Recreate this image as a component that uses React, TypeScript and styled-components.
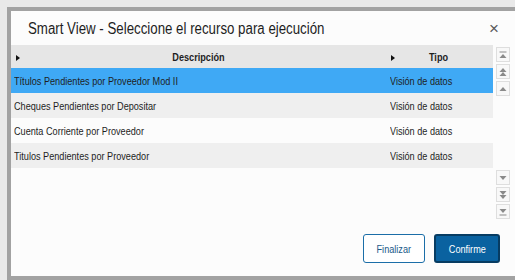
import React from 'react';
import styled, { createGlobalStyle } from 'styled-components';

type Row = {
  name: string;
  type: string;
};

const rows: Row[] = [
  { name: 'Títulos Pendientes por Proveedor Mod II', type: 'Visión de datos' },
  { name: 'Cheques Pendientes por Depositar', type: 'Visión de datos' },
  { name: 'Cuenta Corriente por Proveedor', type: 'Visión de datos' },
  { name: 'Titulos Pendientes por Proveedor', type: 'Visión de datos' }
];

const FONT = '"Liberation Sans", Arial, sans-serif';

const GlobalStyle = createGlobalStyle`
  html, body {
    margin: 0;
    padding: 0;
    background: #e9e9e9;
    overflow: hidden;
  }
  body {
    font-family: ${FONT};
  }
`;

// the source UI uses a narrow sans face; squeeze the glyphs horizontally
const Narrow = styled.span<{ $origin?: 'left' | 'center' }>`
  display: inline-block;
  white-space: nowrap;
  transform: scaleX(0.83);
  transform-origin: ${({ $origin }) => $origin ?? 'left'} center;
`;

const Page = styled.div`
  padding: 7px 0 0 7px;
  height: 280px;
  box-sizing: border-box;
`;

const Frame = styled.div`
  width: 506px;
  height: 265px;
  border: 4px solid #a2a2a2;
  background: #fcfcfc;
  display: flex;
  flex-direction: column;
`;

const TitleBar = styled.div`
  height: 34px;
  display: flex;
  align-items: center;
  padding: 0 0 0 17px;
`;

const Title = styled.div`
  flex: 1;
  font-size: 16px;
  color: #1e1e1e;
  padding-top: 1px;
`;

const Close = styled.div`
  width: 12px;
  margin-right: 16px;
  color: #5a5a5a;
  font-size: 17px;
  line-height: 1;
`;

const Body = styled.div`
  display: flex;
  gap: 3px;
  height: 174px;
`;

const Grid = styled.div`
  width: 482px;
  display: flex;
  flex-direction: column;
`;

const GridRow = styled.div<{ $variant: 'head' | 'selected' | 'odd' | 'even' }>`
  display: grid;
  grid-template-columns: 374px 108px;
  align-items: center;
  height: ${({ $variant }) => ($variant === 'head' ? '23px' : '25px')};
  font-size: 11px;
  color: #1e1e1e;
  background: ${({ $variant }) =>
    $variant === 'head' ? '#e6e6e6' : $variant === 'selected' ? '#3fa9f5' : $variant === 'odd' ? '#efefef' : '#fcfcfc'};
`;

const HeadCell = styled.div`
  position: relative;
  text-align: center;
  font-weight: bold;
  padding-top: 1px;
`;

const SortArrow = styled.span<{ $left: number }>`
  position: absolute;
  left: ${({ $left }) => $left}px;
  top: 5px;
  width: 0;
  height: 0;
  border-top: 3px solid transparent;
  border-bottom: 3px solid transparent;
  border-left: 4px solid #111;
`;

const Cell = styled.div<{ $pad: number }>`
  padding-left: ${({ $pad }) => $pad}px;
  white-space: nowrap;
`;

const Scroll = styled.div`
  width: 14px;
  display: flex;
  flex-direction: column;
  justify-content: space-between;
  padding: 2px 0 0;
`;

const ScrollGroup = styled.div`
  display: flex;
  flex-direction: column;
  gap: 2px;
`;

const ScrollButton = styled.div`
  width: 12px;
  height: 13px;
  border: 1px solid #dedede;
  background: #f8f8f8;
  display: flex;
  align-items: center;
  justify-content: center;
`;

const Footer = styled.div`
  flex: 1;
  display: flex;
  justify-content: flex-end;
  align-items: flex-start;
  gap: 9px;
  padding: 15px 17px 0 0;
`;

const Button = styled.button<{ $primary?: boolean }>`
  height: 29px;
  width: ${({ $primary }) => ($primary ? '66px' : '62px')};
  box-sizing: border-box;
  border-radius: 3px;
  padding: 0;
  font-family: ${FONT};
  font-size: 11px;
  cursor: pointer;
  border: ${({ $primary }) => ($primary ? '2px solid #073c62' : '1px solid #1b6ea8')};
  background: ${({ $primary }) => ($primary ? '#0a62a0' : '#ffffff')};
  color: ${({ $primary }) => ($primary ? '#ffffff' : '#1a5a8a')};
`;

type IconKind = 'top' | 'pageUp' | 'up' | 'down' | 'pageDown' | 'bottom';

const ScrollIcon = ({ kind }: { kind: IconKind }) => {
  const up = kind === 'top' || kind === 'pageUp' || kind === 'up';
  const tri = (y: number) => (up ? `M1.5 ${y + 4}L5 ${y}L8.5 ${y + 4}Z` : `M1.5 ${y}L5 ${y + 4}L8.5 ${y}Z`);

  return (
    <svg height='10' viewBox='0 0 10 10' width='10'>
      {kind === 'top' && <rect fill='#8a8a8a' height='1' width='7' x='1.5' y='1.5' />}
      {kind === 'bottom' && <rect fill='#8a8a8a' height='1' width='7' x='1.5' y='7.5' />}
      {kind === 'pageUp' && (
        <>
          <path d={tri(1)} fill='#8a8a8a' />
          <path d={tri(5)} fill='#8a8a8a' />
        </>
      )}
      {kind === 'pageDown' && (
        <>
          <path d={tri(1)} fill='#8a8a8a' />
          <path d={tri(5)} fill='#8a8a8a' />
        </>
      )}
      {kind === 'top' && <path d={tri(4)} fill='#8a8a8a' />}
      {kind === 'bottom' && <path d={tri(2)} fill='#8a8a8a' />}
      {(kind === 'up' || kind === 'down') && <path d={tri(3)} fill='#8a8a8a' />}
    </svg>
  );
};

const App = (): React.ReactElement => {
  return (
    <Page>
      <GlobalStyle />
      <Frame>
        <TitleBar>
          <Title><Narrow>Smart View - Seleccione el recurso para ejecución</Narrow></Title>
          <Close>×</Close>
        </TitleBar>
        <Body>
          <Grid>
            <GridRow $variant='head'>
              <HeadCell>
                <SortArrow $left={5} />
                <Narrow $origin='center'>Descripción</Narrow>
              </HeadCell>
              <HeadCell>
                <SortArrow $left={6} />
                <Narrow $origin='center'>Tipo</Narrow>
              </HeadCell>
            </GridRow>
            {rows.map((row, i) => (
              <GridRow
                $variant={i === 0 ? 'selected' : i % 2 === 1 ? 'odd' : 'even'}
                key={row.name}
              >
                <Cell $pad={3}><Narrow>{row.name}</Narrow></Cell>
                <Cell $pad={5}><Narrow>{row.type}</Narrow></Cell>
              </GridRow>
            ))}
          </Grid>
          <Scroll>
            <ScrollGroup>
              <ScrollButton><ScrollIcon kind='top' /></ScrollButton>
              <ScrollButton><ScrollIcon kind='pageUp' /></ScrollButton>
              <ScrollButton><ScrollIcon kind='up' /></ScrollButton>
            </ScrollGroup>
            <ScrollGroup>
              <ScrollButton><ScrollIcon kind='down' /></ScrollButton>
              <ScrollButton><ScrollIcon kind='pageDown' /></ScrollButton>
              <ScrollButton><ScrollIcon kind='bottom' /></ScrollButton>
            </ScrollGroup>
          </Scroll>
        </Body>
        <Footer>
          <Button><Narrow $origin='center'>Finalizar</Narrow></Button>
          <Button $primary><Narrow $origin='center'>Confirme</Narrow></Button>
        </Footer>
      </Frame>
    </Page>
  );
};

export default App;
